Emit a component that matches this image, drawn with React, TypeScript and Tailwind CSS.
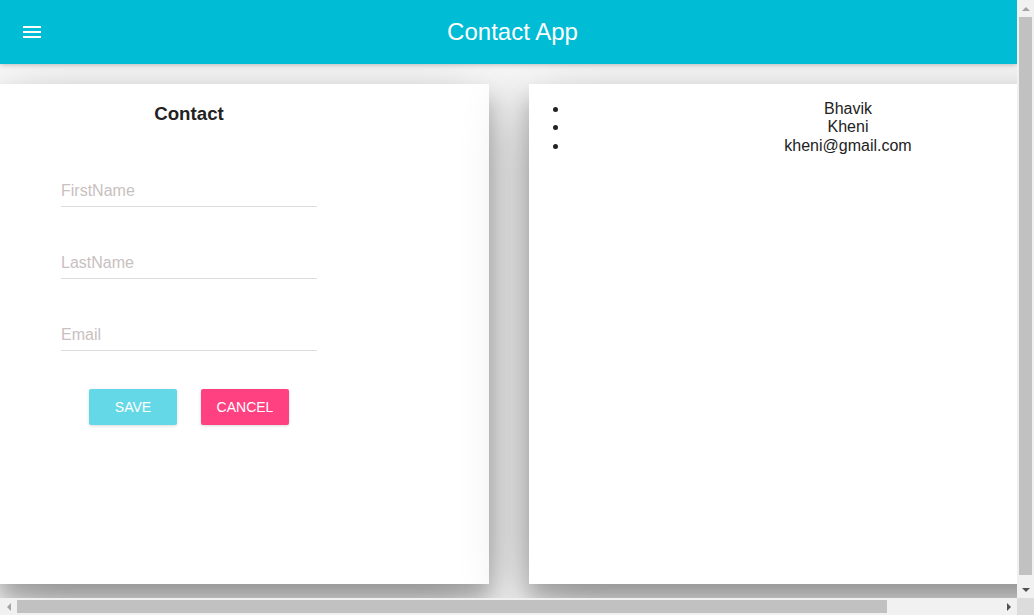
function Field({ label }: { label: string }) {
  return (
    <input
      placeholder={label}
      className="block h-8 w-64 border-b border-[#dcdcdc] bg-transparent text-base text-[#222] outline-none placeholder:text-[#c9c0c0]"
    />
  );
}

// little triangles for the scrollbar buttons
function Arrow({ dir, color }: { dir: "up" | "down" | "left" | "right"; color: string }) {
  const pts = {
    up: "0,4 4,0 8,4",
    down: "0,0 8,0 4,4",
    left: "4,0 4,8 0,4",
    right: "0,0 4,4 0,8",
  }[dir];
  const vertical = dir === "up" || dir === "down";
  return (
    <svg width={vertical ? 8 : 4} height={vertical ? 4 : 8} viewBox={vertical ? "0 0 8 4" : "0 0 4 8"}>
      <polygon points={pts} fill={color} />
    </svg>
  );
}

const cardShadow = "shadow-[0_19px_60px_rgba(0,0,0,0.3),0_15px_20px_rgba(0,0,0,0.22)]";

export default function App() {
  return (
    <div className="grid h-[615px] w-[1034px] grid-cols-[1017px_17px] grid-rows-[598px_17px] font-['Liberation_Sans',Arial,sans-serif]">
      <div className="overflow-hidden bg-[#fafafa]">
        <div className="w-[1149px] text-[#222]">
          <header className="relative z-10 flex h-16 w-[1017px] items-center bg-[#00bcd4] shadow-[0_1px_6px_rgba(0,0,0,0.12),0_1px_4px_rgba(0,0,0,0.12)]">
            <button className="ml-5 flex h-6 w-6 items-center justify-center text-white">
              <svg width="24" height="24" viewBox="0 0 24 24" fill="currentColor">
                <rect x="3" y="6" width="18" height="2" />
                <rect x="3" y="11" width="18" height="2" />
                <rect x="3" y="16" width="18" height="2" />
              </svg>
            </button>
            <h1 className="flex-1 pr-[40px] pl-[4px] text-center text-2xl text-white">Contact App</h1>
          </header>

          <main className="flex gap-10 pt-5 pr-[22px] pb-6">
            <section className={`h-[500px] w-[489px] bg-white ${cardShadow}`}>
              <div className="flex w-[378px] flex-col items-center pt-[18.7px]">
                <h3 className="text-[18.72px] leading-[1.15] font-bold">Contact</h3>
                <div className="mt-[51px] flex flex-col gap-10">
                  <Field label="FirstName" />
                  <Field label="LastName" />
                  <Field label="Email" />
                </div>
                <div className="mt-[38px] flex gap-6">
                  <button className="h-9 w-22 rounded-[2px] bg-[#64d8e6] text-sm text-white shadow-[0_1px_3px_rgba(0,0,0,0.15)]">
                    SAVE
                  </button>
                  <button className="h-9 w-22 rounded-[2px] bg-[#ff4081] text-sm text-white shadow-[0_1px_3px_rgba(0,0,0,0.15)]">
                    CANCEL
                  </button>
                </div>
              </div>
            </section>

            <section className={`h-[500px] w-[598px] bg-white ${cardShadow}`}>
              <ul className="my-4 list-disc pl-10 text-base leading-[1.15]">
                <li className="text-center">Bhavik</li>
                <li className="text-center">Kheni</li>
                <li className="text-center">kheni@gmail.com</li>
              </ul>
            </section>
          </main>
        </div>
      </div>

      {/* vertical scrollbar */}
      <div className="flex flex-col bg-[#f1f1f1]">
        <div className="flex h-[17px] items-center justify-center">
          <Arrow dir="up" color="#a3a3a3" />
        </div>
        <div className="flex-1 px-[2px]">
          <div className="h-[558px] bg-[#c1c1c1]" />
        </div>
        <div className="flex h-[17px] items-center justify-center">
          <Arrow dir="down" color="#505050" />
        </div>
      </div>

      {/* horizontal scrollbar */}
      <div className="flex bg-[#f1f1f1]">
        <div className="flex w-[17px] items-center justify-center">
          <Arrow dir="left" color="#a3a3a3" />
        </div>
        <div className="flex-1 py-[2px]">
          <div className="h-full w-[870px] bg-[#c1c1c1]" />
        </div>
        <div className="flex w-[17px] items-center justify-center">
          <Arrow dir="right" color="#505050" />
        </div>
      </div>

      <div className="bg-[#dcdcdc]" />
    </div>
  );
}
